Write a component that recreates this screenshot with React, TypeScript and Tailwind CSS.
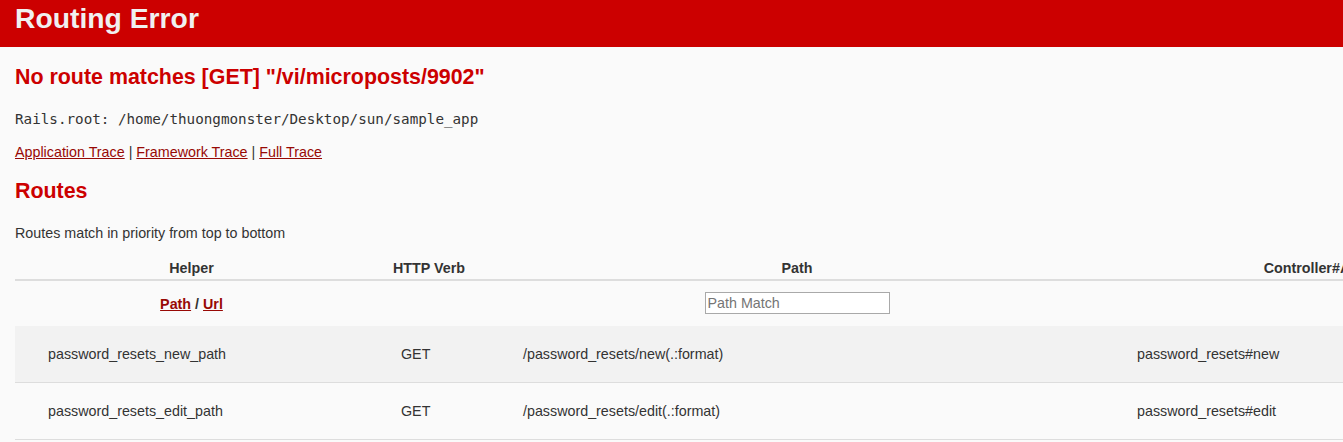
import React from 'react';

interface Route {
  helper: string;
  verb: string;
  path: string;
  action: string;
}

const routes: Route[] = [
  {
    helper: 'password_resets_new_path',
    verb: 'GET',
    path: '/password_resets/new(.:format)',
    action: 'password_resets#new',
  },
  {
    helper: 'password_resets_edit_path',
    verb: 'GET',
    path: '/password_resets/edit(.:format)',
    action: 'password_resets#edit',
  },
];

const App: React.FC = () => {
  return (
    <div className="min-h-screen w-full overflow-hidden bg-[#fafafa] text-[#333] font-['Liberation_Sans',Arial,sans-serif] text-[14.3px] leading-[18px]">
      <header className="h-[47px] bg-[#cc0000] px-[15px] pt-[3px]">
        <h1 className="text-[28.3px] font-bold leading-[31px] text-[#f0f0f0]">Routing Error</h1>
      </header>

      <div className="px-[15px]">
        <h2 className="mt-[19px] text-[21.4px] font-bold leading-[23px] text-[#cc0000]">
          No route matches [GET] "/vi/microposts/9902"
        </h2>

        <p className="mt-[21px] font-['DejaVu_Sans_Mono',monospace] text-[14.25px] leading-[18px] whitespace-pre">
          Rails.root: /home/thuongmonster/Desktop/sun/sample_app
        </p>

        <p className="mt-[15px]">
          <a href="#" className="text-[#980905] underline">Application Trace</a> |{' '}
          <a href="#" className="text-[#980905] underline">Framework Trace</a> |{' '}
          <a href="#" className="text-[#980905] underline">Full Trace</a>
        </p>

        <h2 className="mt-[19px] text-[21.4px] font-bold leading-[23px] text-[#cc0000]">Routes</h2>

        <p className="mt-[21px]">Routes match in priority from top to bottom</p>

        <table className="mt-[8px] w-[1529px] min-w-[1529px] table-fixed border-collapse">
          <colgroup>
            <col className="w-[353px]" />
            <col className="w-[122px]" />
            <col className="w-[614px]" />
            <col className="w-[440px]" />
          </colgroup>
          <thead>
            <tr className="border-b-2 border-[#ddd]">
              <th className="pt-[9px] pb-[2px] text-center font-bold leading-[18px]">Helper</th>
              <th className="pt-[9px] pb-[2px] text-center font-bold leading-[18px]">HTTP Verb</th>
              <th className="pt-[9px] pb-[2px] text-center font-bold leading-[18px]">Path</th>
              <th className="pt-[9px] pb-[2px] text-center font-bold leading-[18px]">Controller#Action</th>
            </tr>
            <tr className="h-[46px]">
              <th className="text-center align-middle font-bold">
                <a href="#" className="text-[#980905] underline">Path</a> /{' '}
                <a href="#" className="text-[#980905] underline">Url</a>
              </th>
              <th></th>
              <th className="pb-[2px] text-center align-middle">
                <input
                  type="search"
                  placeholder="Path Match"
                  className="h-[22px] w-[185px] border border-[#a9a9a9] bg-white px-[2px] align-middle text-[14.3px] font-normal text-[#333] placeholder:text-[#757575] outline-none"
                />
              </th>
              <th></th>
            </tr>
          </thead>
          <tbody>
            {routes.map((r, i) => (
              <tr key={r.helper} className={`border-b border-[#ddd] ${i % 2 === 0 ? 'bg-[#f2f2f2]' : 'bg-[#fafafa]'}`}>
                <td className="py-[19px] pl-[33px] leading-[18px]">{r.helper}</td>
                <td className="py-[19px] pl-[33px] leading-[18px]">{r.verb}</td>
                <td className="py-[19px] pl-[33px] leading-[18px]">{r.path}</td>
                <td className="py-[19px] pl-[33px] leading-[18px]">{r.action}</td>
              </tr>
            ))}
          </tbody>
        </table>
      </div>
    </div>
  );
};

export default App;
